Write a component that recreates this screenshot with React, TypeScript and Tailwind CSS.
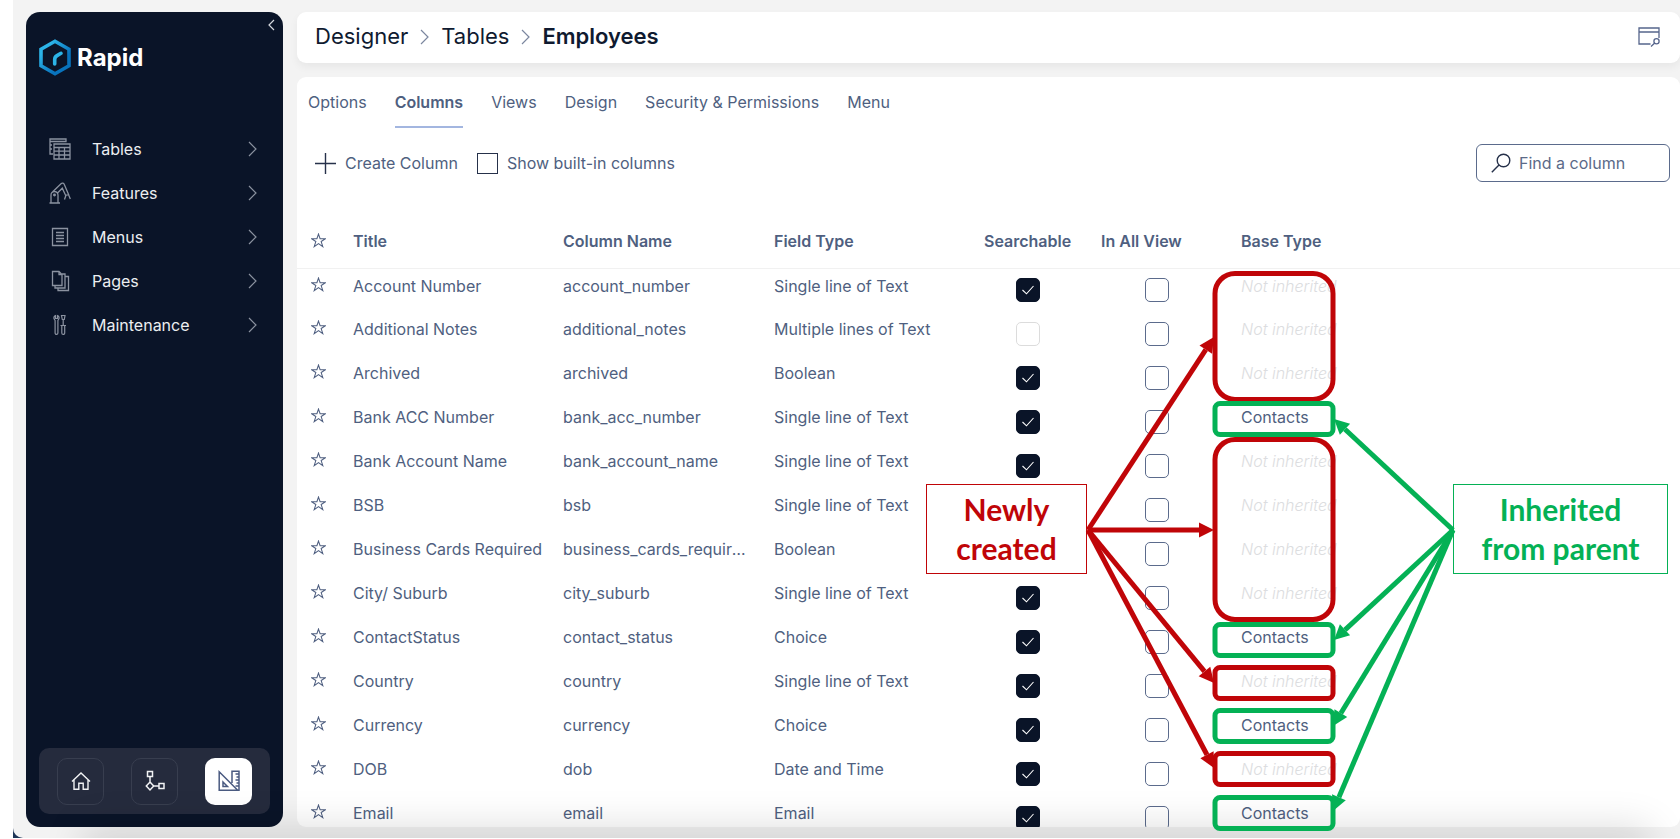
import React from "react";

type Row = { title: string; name: string; type: string; searchable: boolean; base: string | null };

const rows: Row[] = [
  { title: "Account Number", name: "account_number", type: "Single line of Text", searchable: true, base: null },
  { title: "Additional Notes", name: "additional_notes", type: "Multiple lines of Text", searchable: false, base: null },
  { title: "Archived", name: "archived", type: "Boolean", searchable: true, base: null },
  { title: "Bank ACC Number", name: "bank_acc_number", type: "Single line of Text", searchable: true, base: "Contacts" },
  { title: "Bank Account Name", name: "bank_account_name", type: "Single line of Text", searchable: true, base: null },
  { title: "BSB", name: "bsb", type: "Single line of Text", searchable: true, base: null },
  { title: "Business Cards Required", name: "business_cards_required", type: "Boolean", searchable: true, base: null },
  { title: "City/ Suburb", name: "city_suburb", type: "Single line of Text", searchable: true, base: null },
  { title: "ContactStatus", name: "contact_status", type: "Choice", searchable: true, base: "Contacts" },
  { title: "Country", name: "country", type: "Single line of Text", searchable: true, base: null },
  { title: "Currency", name: "currency", type: "Choice", searchable: true, base: "Contacts" },
  { title: "DOB", name: "dob", type: "Date and Time", searchable: true, base: null },
  { title: "Email", name: "email", type: "Email", searchable: true, base: "Contacts" },
];

const TablesIcon = () => (
  <svg width="22" height="22" viewBox="0 0 22 22" fill="none" stroke="currentColor" strokeWidth="1.300">
    <path d="M1 1h16v2.500H1zM1 3.500v12.500h3M1 7h2M1 11h2M5 6h16v15H5zM5 9.500h16M5 13.200h16M5 17h16M10 9.500V21M15.500 9.500V21" />
  </svg>
);
const FeaturesIcon = () => (
  <svg width="22" height="22" viewBox="0 0 22 22" fill="none" stroke="currentColor" strokeWidth="1.300">
    <path d="M0.500 21h10.500M2 21v-8a3.500 3.500 0 0 1 7 0V21M3.500 10l8.500-8.300c1.200-1 2.700-.5 3.300.8L20 13.500M8.500 11l4.800-4.800 3.500 7.500M15.500 17.500l1.500-4.500 2.500-.5 1.800 4.500" />
    <circle cx="5.500" cy="13" r="0.800" fill="currentColor" />
  </svg>
);
const MenusIcon = () => (
  <svg width="22" height="22" viewBox="0 0 22 22" fill="none" stroke="currentColor" strokeWidth="1.300">
    <path d="M3.500 2.500h15v17h-15zM7 6.500h8M7 9.500h8M7 12.500h8M7 15.500h8" />
  </svg>
);
const PagesIcon = () => (
  <svg width="22" height="22" viewBox="0 0 22 22" fill="none" stroke="currentColor" strokeWidth="1.300">
    <path d="M3.500 1.500h6.500l3 3v11h-9.500zM10 1.500v3h3M13 4h3v14H6v-2.500M16 6.500h3.500V20.500H9V18" />
  </svg>
);
const MaintenanceIcon = () => (
  <svg width="22" height="22" viewBox="0 0 22 22" fill="none" stroke="currentColor" strokeWidth="1.200">
    <path d="M6.500 1.500v3h2v-3a2.500 2.500 0 0 1 1 4l-.6 1V19a1.400 1.400 0 0 1-2.800 0V6.500l-.6-1a2.500 2.500 0 0 1 1-4zM12.500 1.500h3.500l-.7 4h-2zM14.200 5.500v6M11.500 11.500h5.500M12.800 11.500V19a1.400 1.400 0 0 0 2.900 0v-7.500" />
  </svg>
);

const nav = [
  { label: "Tables", Icon: TablesIcon },
  { label: "Features", Icon: FeaturesIcon },
  { label: "Menus", Icon: MenusIcon },
  { label: "Pages", Icon: PagesIcon },
  { label: "Maintenance", Icon: MaintenanceIcon },
];

const Chevron = ({ className }: { className: string }) => (
  <svg width="9" height="16" viewBox="0 0 9 16" fill="none" stroke="currentColor" strokeWidth="1.200" className={className}>
    <path d="M1 1l7 7-7 7" />
  </svg>
);

const Star = () => (
  <svg width="15" height="15" viewBox="0 0 14 14" fill="none" stroke="currentColor" strokeWidth="1">
    <path d="M7 1l1.500 4.300h4.900L9.500 8l1.500 4.700L7 9.900l-4 2.800L4.500 8 .6 5.300h4.900z" />
  </svg>
);

function Sidebar() {
  return (
    <aside className="flex w-[257px] shrink-0 flex-col rounded-[14px] bg-[#0a1428] text-white">
      <div className="flex h-[27px] items-end justify-end pr-2">
        <button aria-label="Collapse sidebar" className="text-[#d5d8de]">
          <svg width="7" height="12" viewBox="0 0 7 12" fill="none" stroke="currentColor" strokeWidth="1.200" className="mb-2">
            <path d="M6 1L1 6l5 5" />
          </svg>
        </button>
      </div>
      <div className="flex items-center gap-[6px] pl-[13px]">
        <svg width="32" height="37" viewBox="0 0 32 37" fill="none">
          <defs>
            <linearGradient id="hex" x1="0" y1="0" x2="1" y2="1">
              <stop offset="0.200" stopColor="#2cb4e8" />
              <stop offset="0.700" stopColor="#0873bd" />
            </linearGradient>
          </defs>
          <path d="M16 2.300l14 8v16.400l-14 8-14-8V10.300z" stroke="url(#hex)" strokeWidth="3.600" />
          <path d="M15.700 25v-4.500c0-2 .8-3 2.300-3.900l4-2.300" stroke="#2cb4e8" strokeWidth="3.600" strokeLinecap="round" />
        </svg>
        <span className="text-2xl font-bold">Rapid</span>
      </div>
      <nav className="mt-[51px] flex flex-col">
        {nav.map(({ label, Icon }) => (
          <button key={label} className="flex h-11 items-center pr-[26px] pl-[23px] text-left text-base text-[#eceef1]">
            <span className="w-[43px] text-[#8b92a0]">
              <Icon />
            </span>
            <span className="flex-1">{label}</span>
            <Chevron className="text-[#8b92a0]" />
          </button>
        ))}
      </nav>
      <div className="mx-[13px] mt-auto mb-[13px] flex h-[66px] items-center justify-between rounded-[10px] bg-[#252b3d] px-[18px]">
        <button aria-label="Home" className="flex size-[47px] items-center justify-center rounded-[10px] border border-[#383e4f]">
          <svg width="20" height="20" viewBox="0 0 20 20" fill="none" stroke="#f1f2f4" strokeWidth="1.400">
            <path d="M1 10.500L10 2l9 8.500M3 9v9.300h4.800v-6h4.400v6H17V9" />
          </svg>
        </button>
        <button aria-label="Workflows" className="flex size-[47px] items-center justify-center rounded-[10px] border border-[#383e4f]">
          <svg width="22" height="22" viewBox="0 0 22 22" fill="none" stroke="#f1f2f4" strokeWidth="1.500">
            <path d="M3.500 1.500h5v5h-5zM6 6.500V12M6 12l3.700 4L6 20l-3.700-4zM9.700 16h5.300M15 13.500h5v5h-5z" />
          </svg>
        </button>
        <button aria-label="Designer" className="flex size-[47px] items-center justify-center rounded-[10px] bg-white">
          <svg width="22" height="22" viewBox="0 0 22 22" fill="none" stroke="#4a5a80" strokeWidth="1.500">
            <path d="M1.200 1.800v18.500h18.500zM5 12v4.500h4.500zM14 13V1.200h7v19.100h-2M17.500 4H21M18.500 7H21M17.500 10H21M18.500 13H21M17.500 16H21" />
          </svg>
        </button>
      </div>
    </aside>
  );
}

function Check({ checked, label, light }: { checked: boolean; label: string; light?: boolean }) {
  return (
    <label className="relative block size-6">
      <input
        type="checkbox"
        aria-label={label}
        defaultChecked={checked}
        className={
          "block size-6 appearance-none rounded-[5px] border bg-white checked:border-[#0a1428] checked:bg-[#0a1428] " +
          (light ? "border-[#dcdcdc]" : "border-[#5b6b8c]")
        }
      />
      {checked && (
        <svg viewBox="0 0 24 24" fill="none" stroke="#fff" strokeWidth="1.100" className="pointer-events-none absolute inset-0">
          <path d="M6.500 12l4 3.800 7-7.800" />
        </svg>
      )}
    </label>
  );
}

const RED = "#c00508";
const GREEN = "#04b155";

const outlines = [
  { y: 271, h: 131, c: RED, r: 20 },
  { y: 401, h: 36, c: GREEN, r: 5 },
  { y: 437, h: 185, c: RED, r: 20 },
  { y: 622, h: 36, c: GREEN, r: 5 },
  { y: 665, h: 36, c: RED, r: 5 },
  { y: 708, h: 36, c: GREEN, r: 5 },
  { y: 751, h: 36, c: RED, r: 5 },
  { y: 795, h: 36, c: GREEN, r: 5 },
];

const arrows = [
  { x1: 1088, y1: 530, x2: 1214, y2: 337, c: RED },
  { x1: 1088, y1: 530, x2: 1214, y2: 530, c: RED },
  { x1: 1088, y1: 530, x2: 1214, y2: 683, c: RED },
  { x1: 1088, y1: 530, x2: 1214, y2: 768, c: RED },
  { x1: 1453, y1: 530, x2: 1334, y2: 419, c: GREEN },
  { x1: 1453, y1: 530, x2: 1334, y2: 640, c: GREEN },
  { x1: 1453, y1: 530, x2: 1333, y2: 726, c: GREEN },
  { x1: 1453, y1: 530, x2: 1333, y2: 811, c: GREEN },
];

function Arrow({ x1, y1, x2, y2, c }: (typeof arrows)[number]) {
  const len = Math.hypot(x2 - x1, y2 - y1);
  const ux = (x2 - x1) / len;
  const uy = (y2 - y1) / len;
  const bx = x2 - ux * 15;
  const by = y2 - uy * 15;
  return (
    <g>
      <line x1={x1} y1={y1} x2={bx} y2={by} stroke={c} strokeWidth="5" />
      <polygon points={`${x2},${y2} ${bx - uy * 7.5},${by + ux * 7.5} ${bx + uy * 7.5},${by - ux * 7.5}`} fill={c} />
    </g>
  );
}

function Annotations() {
  return (
    <div className="pointer-events-none absolute inset-0 font-['Lato',sans-serif] text-[30px] leading-[39px] font-bold">
      <div className="absolute top-[484px] left-[926px] flex h-[90px] w-[161px] items-center justify-center border border-[#c00508] bg-white text-center text-[#c00508]">
        Newly
        <br />
        created
      </div>
      <div className="absolute top-[484px] left-[1453px] flex h-[90px] w-[215px] items-center justify-center border border-[#04b155] bg-white text-center text-[#04b155]">
        Inherited
        <br />
        from parent
      </div>
      <svg width="1680" height="839" viewBox="0 0 1680 839" fill="none" className="absolute top-0 left-0">
        {outlines.map((o) => (
          <rect key={o.y} x="1215" y={o.y + 2.5} width="118" height={o.h - 5} rx={o.r} stroke={o.c} strokeWidth="5" />
        ))}
        {arrows.map((a) => (
          <Arrow key={`${a.x2}-${a.y2}`} {...a} />
        ))}
      </svg>
    </div>
  );
}

const tabs = ["Options", "Columns", "Views", "Design", "Security & Permissions", "Menu"];

export default function App() {
  return (
    <div className="relative h-screen overflow-hidden bg-white pb-px pl-[13px] font-['Inter',sans-serif] text-base text-[#4f5f80]">
      <div className="relative h-full overflow-hidden bg-[#1d3557]">
        <div className="relative flex h-full gap-[14px] overflow-hidden rounded-bl-[10px] bg-[#f3f3f3] pt-3 pb-[11px] pl-[13px]">
          <Sidebar />
          <main className="flex min-w-0 flex-1 flex-col gap-[14px]">
            <header className="flex h-[51px] shrink-0 items-center justify-between rounded-[9px] bg-white pr-5 pb-[2px] pl-[18px] shadow-[0_4px_8px_rgba(0,0,0,0.05)]">
              <nav aria-label="Breadcrumb" className="flex items-center gap-3 text-[22px] text-[#0f1a30]">
                <a href="#designer">Designer</a>
                <Chevron className="text-[#7b879f]" />
                <a href="#tables">Tables</a>
                <Chevron className="text-[#7b879f]" />
                <span className="font-semibold">Employees</span>
              </nav>
              <button aria-label="Preview" className="text-[#56658c]">
                <svg width="22" height="20" viewBox="0 0 22 20" fill="none" stroke="currentColor" strokeWidth="1.300">
                  <path d="M12.500 17H1V1h20v10M1 5h20M13 19.500l4-3.800" />
                  <circle cx="18.500" cy="14.200" r="2.600" />
                </svg>
              </button>
            </header>
            <section className="min-h-0 flex-1 overflow-hidden rounded-[9px] bg-white">
              <div role="tablist" className="flex h-[51px] gap-7 pl-[11px]">
                {tabs.map((t) => (
                  <button
                    key={t}
                    role="tab"
                    aria-selected={t === "Columns"}
                    className={
                      "border-b-2 whitespace-nowrap " +
                      (t === "Columns" ? "border-[#a3b6e0] font-semibold" : "border-transparent")
                    }
                  >
                    {t}
                  </button>
                ))}
              </div>
              <div className="flex h-[70px] items-center justify-between pr-[10px] pl-[18px]">
                <div className="flex items-center gap-[19px]">
                  <button className="flex items-center gap-[9px]">
                    <svg width="21" height="21" viewBox="0 0 21 21" fill="none" stroke="#26314a" strokeWidth="1.400">
                      <path d="M0 10.500h21M10.500 0v21" />
                    </svg>
                    Create Column
                  </button>
                  <label className="flex items-center gap-[9px]">
                    <input type="checkbox" className="size-[21px] appearance-none border border-[#26314a] bg-white" />
                    Show built-in columns
                  </label>
                </div>
                <label className="flex h-[38px] w-[194px] items-center gap-2 rounded-md border border-[#5b6b8c] pl-[14px]">
                  <svg width="20" height="20" viewBox="0 0 20 20" fill="none" stroke="#26314a" strokeWidth="1.400" className="shrink-0">
                    <circle cx="12.500" cy="7.500" r="6.300" />
                    <path d="M8 12L0.800 19.300" />
                  </svg>
                  <input aria-label="Find a column" placeholder="Find a column" className="w-full min-w-0 bg-transparent outline-none placeholder:text-[#5b6a88]" />
                </label>
              </div>
              <table className="w-full table-fixed border-collapse text-left">
                <colgroup>
                  <col className="w-14" />
                  <col className="w-[210px]" />
                  <col className="w-[211px]" />
                  <col className="w-[210px]" />
                  <col className="w-[117px]" />
                  <col className="w-[140px]" />
                  <col className="w-[110px]" />
                  <col />
                </colgroup>
                <thead>
                  <tr className="h-[70px] border-b border-[#f1f1f1] font-semibold">
                    <th scope="col" aria-label="Favourite" className="pt-4 pl-[14px]">
                      <Star />
                    </th>
                    {["Title", "Column Name", "Field Type", "Searchable", "In All View", "Base Type"].map((h) => (
                      <th key={h} scope="col" className="pt-4 font-semibold whitespace-nowrap">
                        {h}
                      </th>
                    ))}
                    <td />
                  </tr>
                </thead>
                <tbody>
                  {rows.map((r) => (
                    <tr key={r.name} className="h-11">
                      <td className="pt-2 pl-[14px] align-top">
                        <Star />
                      </td>
                      <td className="pt-[5px] align-top whitespace-nowrap">{r.title}</td>
                      <td className="truncate pt-[5px] pr-6 align-top">{r.name}</td>
                      <td className="pt-[5px] align-top whitespace-nowrap">{r.type}</td>
                      <td className="pl-8">
                        <Check checked={r.searchable} light={!r.searchable} label={`${r.title} searchable`} />
                      </td>
                      <td className="pl-11">
                        <Check checked={false} label={`${r.title} in all view`} />
                      </td>
                      <td className="pt-[5px] align-top whitespace-nowrap">
                        {r.base ?? <em className="font-light text-[#dcdde0]">Not inherited</em>}
                      </td>
                      <td />
                    </tr>
                  ))}
                </tbody>
              </table>
            </section>
          </main>
          <div className="pointer-events-none absolute top-full right-10 left-20 h-10 shadow-[0_0_40px_10px_rgba(0,0,0,0.14)]" />
        </div>
      </div>
      <Annotations />
    </div>
  );
}
